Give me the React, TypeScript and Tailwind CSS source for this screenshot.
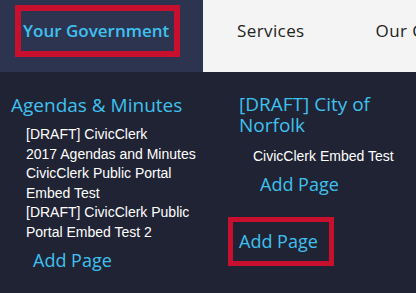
import React from 'react'

const heading = "font-['Open_Sans',sans-serif] text-[#3fc1f0]"
const item = "font-['Liberation_Sans',Arial,sans-serif] text-[14px] leading-[19.5px] text-white"

export default function App() {
  return (
    <div className="w-[416px] h-[293px] overflow-hidden bg-[#1f2333]">
      <div className="flex h-[72px]">
        <div className="w-[203px] shrink-0 bg-[#2d3450] pl-[15px] pt-[5px]">
          <div className="w-[165px] h-[52px] border-[6px] border-[#c8102e] flex items-center pl-[2px]">
            <span className={`${heading} text-[17px] font-semibold whitespace-nowrap`}>Your Government</span>
          </div>
        </div>
        <div className="flex-1 min-w-0 overflow-hidden bg-[#f4f4f4] flex items-start pt-[18px] pl-[34px] gap-[71px] font-['Open_Sans',sans-serif] text-[17px] font-medium text-[#222] whitespace-nowrap tracking-[0.4px]">
          <span>Services</span>
          <span>Our Community</span>
        </div>
      </div>

      <div className="flex pt-[20px]">
        <div className="w-[239px] shrink-0 pl-[11px]">
          <h3 className={`${heading} text-[19px] leading-[26px]`}>Agendas &amp; Minutes</h3>
          <ul className="pl-[15px] pt-[7px] w-[192px]">
            <li className={item}>[DRAFT] CivicClerk</li>
            <li className={item}>2017 Agendas and Minutes</li>
            <li className={item}>CivicClerk Public Portal Embed Test</li>
            <li className={item}>[DRAFT] CivicClerk Public Portal Embed Test 2</li>
          </ul>
          <div className={`${heading} text-[18px] pl-[22px] pt-[5px]`}>Add Page</div>
        </div>
        <div className="w-[177px] shrink-0">
          <h3 className={`${heading} text-[19px] leading-[21px] w-[170px] pt-[2px]`}>[DRAFT] City of Norfolk</h3>
          <ul className="pl-[14px] pt-[11px]">
            <li className={item}>CivicClerk Embed Test</li>
          </ul>
          <div className={`${heading} text-[18px] pl-[21px] pt-[4px]`}>Add Page</div>
          <div className="mt-[19px] -ml-[11px] w-[106px] h-[49px] border-[5px] border-[#c8102e] flex items-center pl-[6px]">
            <span className={`${heading} text-[18px]`}>Add Page</span>
          </div>
        </div>
      </div>
    </div>
  )
}
